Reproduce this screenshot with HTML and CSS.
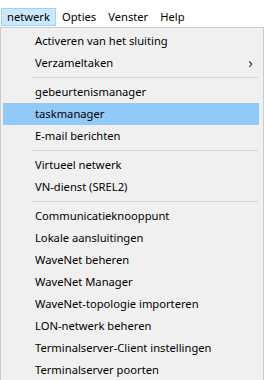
FILE: index.html
```html
<!DOCTYPE html>
<html lang="nl">
  <head>
    <meta charset="UTF-8" />
    <title>netwerk</title>
    <link rel="stylesheet" href="styles.css">
  </head>
  <body>
    <ul class="menubar">
      <li class="open">netwerk</li>
      <li>Opties</li>
      <li>Venster</li>
      <li>Help</li>
    </ul>

    <ul class="dropdown">
      <li>Activeren van het sluiting</li>
      <li class="sub">Verzameltaken <span class="arrow">&#x203A;</span></li>
      <li class="sep"></li>
      <li>gebeurtenismanager</li>
      <li class="active">taskmanager</li>
      <li>E-mail berichten</li>
      <li class="sep"></li>
      <li>Virtueel netwerk</li>
      <li>VN-dienst (SREL2)</li>
      <li class="sep"></li>
      <li>Communicatieknooppunt</li>
      <li>Lokale aansluitingen</li>
      <li>WaveNet beheren</li>
      <li>WaveNet Manager</li>
      <li>WaveNet-topologie importeren</li>
      <li>LON-netwerk beheren</li>
      <li>Terminalserver-Client instellingen</li>
      <li>Terminalserver poorten</li>
    </ul>
  </body>
</html>
```

FILE: styles.css
```css
* {
  box-sizing: border-box;
  margin: 0;
  padding: 0;
}

body {
  font-family: "Noto Sans", "Open Sans", sans-serif;
  font-size: 11.2px;
  color: #000;
  background: #fff;
  overflow: hidden;
}

ul {
  list-style: none;
}

.menubar {
  display: flex;
  padding: 8px 0 0 1px;
  height: 27px;
}

.menubar li {
  height: 18px;
  line-height: 16px;
  padding: 0 5px;
  border: 1px solid transparent;
}

.menubar li.open {
  background: #cce8ff;
  border-color: #99d1ff;
}

.dropdown {
  background: #f0f0f0;
  border: 1px solid #cccccc;
  padding: 2px 2px;
  width: 264px;
}

.dropdown li {
  display: flex;
  align-items: center;
  height: 22px;
  padding: 0 0 2px 32px;
  margin-right: 2px;
}

.dropdown li.active {
  background: #91c9f7;
}

.dropdown li.sub {
  justify-content: space-between;
}

.arrow {
  font-size: 15px;
  color: #333;
  margin-right: 6px;
}

.dropdown li.sep {
  height: 7px;
  padding: 0;
  margin: 0 3px 0 28px;
}

.dropdown li.sep::after {
  content: "";
  display: block;
  width: 100%;
  height: 1px;
  background: #d7d7d7;
}
```
